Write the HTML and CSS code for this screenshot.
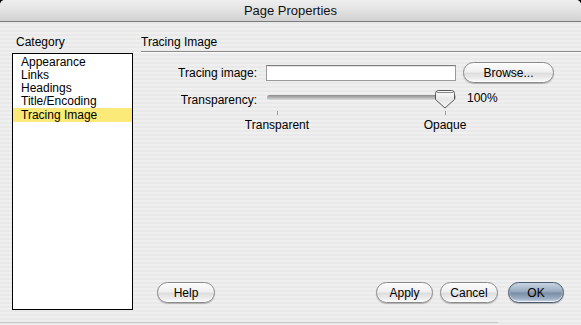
FILE: index.html
```html
<!DOCTYPE html>
<html lang="en">
<head>
    <meta charset="UTF-8">
    <title>Page Properties</title>
    <link rel="stylesheet" href="styles.css">
</head>
<body>
    <div class="window">
        <div class="titlebar">Page Properties</div>

        <div class="content">
            <div class="sidebar">
                <div class="section-title">Category</div>
                <ul class="category-list">
                    <li>Appearance</li>
                    <li>Links</li>
                    <li>Headings</li>
                    <li>Title/Encoding</li>
                    <li class="selected">Tracing Image</li>
                </ul>
            </div>

            <div class="panel">
                <div class="panel-title">Tracing Image</div>

                <div class="form">
                    <label class="form-label">Tracing image:</label>
                    <div class="form-field">
                        <input type="text" class="text-input">
                        <button class="aqua-btn browse-btn">Browse...</button>
                    </div>

                    <label class="form-label">Transparency:</label>
                    <div class="form-field">
                        <div class="slider">
                            <div class="slider-track"></div>
                            <svg class="slider-thumb" width="20" height="19" viewBox="0 0 20 19">
                                <defs>
                                    <linearGradient id="thumbFill" x1="0" y1="0" x2="0" y2="1">
                                        <stop offset="0" stop-color="#ffffff"/>
                                        <stop offset="0.5" stop-color="#e6e6e6"/>
                                        <stop offset="1" stop-color="#f6f6f6"/>
                                    </linearGradient>
                                </defs>
                                <path d="M3.5 0.5 H16.5 Q19.5 0.5 19.5 3.5 V9.5 L10 18 L0.5 9.5 V3.5 Q0.5 0.5 3.5 0.5 Z" fill="url(#thumbFill)" stroke="#555" stroke-width="1"/>
                                <path d="M2 2.5 H18" stroke="#888" stroke-width="1"/>
                            </svg>
                        </div>
                        <span class="slider-value">100%</span>
                    </div>
                </div>

                <div class="ticks">
                    <div class="tick-item">
                        <span class="tick"></span>
                        <span class="tick-label">Transparent</span>
                    </div>
                    <div class="tick-item">
                        <span class="tick"></span>
                        <span class="tick-label">Opaque</span>
                    </div>
                </div>

                <div class="button-row">
                    <button class="aqua-btn help-btn">Help</button>
                    <div class="button-group">
                        <button class="aqua-btn apply-btn">Apply</button>
                        <button class="aqua-btn cancel-btn">Cancel</button>
                        <button class="aqua-btn default-btn">OK</button>
                    </div>
                </div>
            </div>
        </div>

        <div class="bottom-edge"></div>
    </div>
</body>
</html>
```

FILE: styles.css
```css
/* Global Styles */
html {
    background-color: #000;
}

body {
    margin: 0;
    padding: 0;
    font-family: 'Liberation Sans', Arial, sans-serif;
    font-size: 12px;
    color: #000;
}

.window {
    width: 581px;
    height: 325px;
    display: flex;
    flex-direction: column;
    overflow: hidden;
    border-radius: 5px 5px 0 0;
    background-color: #ededed;
    background-image: repeating-linear-gradient(to bottom, #efefef 0, #efefef 2px, #e9e9e9 2px, #e9e9e9 4px);
}

/* Title bar */
.titlebar {
    height: 21px;
    line-height: 22px;
    text-align: center;
    font-size: 13px;
    color: #111;
    border-bottom: 1px solid #7a7a7a;
    background: linear-gradient(to bottom, #eeeeee 0%, #e2e2e2 50%, #d2d2d2 100%);
}

.content {
    flex: 1;
    display: flex;
    padding: 13px 0 0 12px;
}

/* Category sidebar */
.sidebar {
    width: 121px;
}

.section-title {
    height: 18px;
    padding-left: 4px;
    line-height: 14px;
}

.category-list {
    list-style: none;
    margin: 0;
    padding: 2px 0 0 0;
    height: 253px;
    border: 1px solid #000;
    background-color: #fff;
}

.category-list li {
    height: 13px;
    line-height: 13px;
    padding-left: 8px;
}

.category-list li.selected {
    background-color: #fbea77;
    height: 14px;
    line-height: 14px;
}

/* Right panel */
.panel {
    flex: 1;
    margin-left: 8px;
    display: flex;
    flex-direction: column;
}

.panel-title {
    height: 16px;
    line-height: 14px;
    border-bottom: 1px solid #8c8c8c;
    box-shadow: 0 1px 0 #fafafa;
}

.form {
    display: grid;
    grid-template-columns: 116px auto;
    column-gap: 9px;
    row-gap: 7px;
    margin-top: 10px;
    align-items: center;
}

.form-label {
    text-align: right;
}

.form-field {
    display: flex;
    align-items: center;
}

.text-input {
    width: 184px;
    height: 14px;
    margin: 0;
    padding: 0 2px;
    border: 1px solid #9a9a9a;
    border-top-color: #7c7c7c;
    background-color: #fff;
    box-shadow: inset 0 1px 0 #e4e4e4;
    font-family: inherit;
    font-size: 12px;
}

/* Aqua style push buttons */
.aqua-btn {
    height: 21px;
    margin: 0;
    padding: 0;
    border: 1px solid #8a8a8a;
    border-radius: 11px;
    font-family: inherit;
    font-size: 12px;
    color: #000;
    background: linear-gradient(to bottom, #fdfdfd 0%, #f0f0f0 45%, #dedede 55%, #ececec 80%, #fbfbfb 100%);
    box-shadow: 0 1px 1px rgba(0, 0, 0, 0.25), inset 0 -1px 1px rgba(255, 255, 255, 0.8);
}

.browse-btn {
    width: 91px;
    margin-left: 7px;
}

.slider {
    position: relative;
    width: 189px;
    height: 19px;
    margin-left: 1px;
}

.slider-track {
    position: absolute;
    left: 0;
    right: 0;
    top: 5px;
    height: 5px;
    border-radius: 3px;
    background: linear-gradient(to bottom, #8a8a8a 0%, #b4b4b4 50%, #dadada 100%);
}

.slider-thumb {
    position: absolute;
    left: 168px;
    top: 0;
}

.slider-value {
    margin-left: 11px;
    margin-top: -4px;
}

/* Tick marks and labels below the slider */
.ticks {
    display: flex;
    margin-top: 2px;
    margin-left: 101px;
}

.tick-item {
    width: 70px;
    display: flex;
    flex-direction: column;
    align-items: center;
}

.tick-item + .tick-item {
    margin-left: 98px;
}

.tick {
    width: 1px;
    height: 4px;
    background-color: #9a9a9a;
}

.tick-label {
    margin-top: 3px;
    line-height: 14px;
}

.button-row {
    display: flex;
    justify-content: space-between;
    margin-top: 150px;
    padding-left: 16px;
    padding-right: 17px;
}

.button-group {
    display: flex;
}

.help-btn {
    width: 58px;
}

.apply-btn {
    width: 57px;
}

.cancel-btn {
    width: 58px;
    margin-left: 7px;
}

.default-btn {
    width: 56px;
    margin-left: 10px;
    border-color: #4a5a6e;
    background: linear-gradient(to bottom, #c8d4e2 0%, #9fb0c4 40%, #7c90a8 55%, #98abc2 80%, #c4d2e2 100%);
}

.bottom-edge {
    height: 1px;
    width: 498px;
    margin-bottom: 2px;
    background-color: #c4c4c4;
}
```
